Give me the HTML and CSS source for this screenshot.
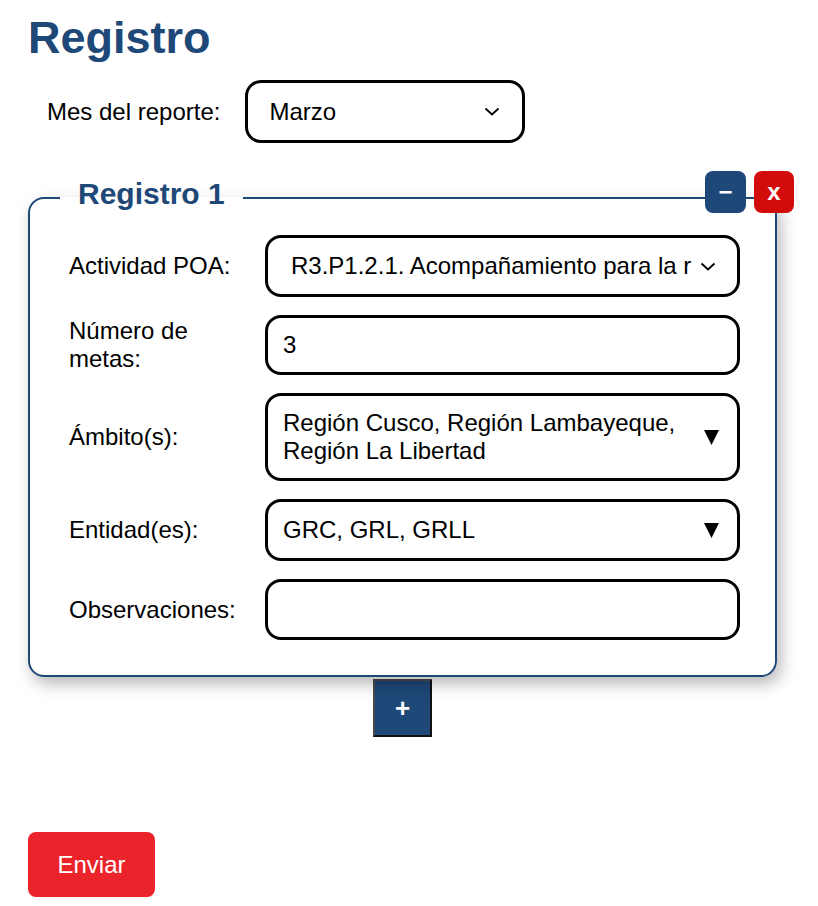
FILE: index.html
```html
<!DOCTYPE html>
<html lang="es">
<head>
<meta charset="utf-8">
<title>Registro</title>
<link rel="stylesheet" href="styles.css">
</head>
<body>
<main class="page">
  <h1 class="title">Registro</h1>

  <div class="month-row">
    <label class="month-label">Mes del reporte:</label>
    <div class="select month-select">
      <span class="select-text">Marzo</span>
      <svg class="chev" width="16" height="9" viewBox="0 0 16 9"><path d="M1.5 1.5 L8 7.5 L14.5 1.5" fill="none" stroke="#000" stroke-width="1.8"/></svg>
    </div>
  </div>

  <div class="record">
    <fieldset class="record-box">
      <legend class="record-legend">Registro 1</legend>
      <div class="grid">
        <label class="lbl">Actividad POA:</label>
        <div class="select act-select">
          <span class="select-text clip">R3.P1.2.1. Acompañamiento para la r</span>
          <svg class="chev" width="16" height="9" viewBox="0 0 16 9"><path d="M1.5 1.5 L8 7.5 L14.5 1.5" fill="none" stroke="#000" stroke-width="1.8"/></svg>
        </div>

        <label class="lbl">Número de metas:</label>
        <div class="field">3</div>

        <label class="lbl">Ámbito(s):</label>
        <div class="field multi tall">
          <span class="multi-text">Región Cusco, Región Lambayeque, Región La Libertad</span>
          <svg class="tri" width="15" height="15" viewBox="0 0 15 15"><polygon points="0,0 15,0 7.5,15" fill="#000"/></svg>
        </div>

        <label class="lbl">Entidad(es):</label>
        <div class="field multi ent">
          <span class="multi-text">GRC, GRL, GRLL</span>
          <svg class="tri" width="15" height="15" viewBox="0 0 15 15"><polygon points="0,0 15,0 7.5,15" fill="#000"/></svg>
        </div>

        <label class="lbl">Observaciones:</label>
        <div class="field obs"></div>
      </div>
    </fieldset>
    <div class="record-actions">
      <button class="icon-btn minus" type="button">&minus;</button>
      <button class="icon-btn close" type="button">x</button>
    </div>
  </div>

  <div class="add-row">
    <button class="add-btn" type="button">+</button>
  </div>

  <button class="send-btn" type="button">Enviar</button>
</main>
</body>
</html>
```

FILE: styles.css
```css
* { box-sizing: border-box; }

html, body {
  margin: 0;
  padding: 0;
  background: #fff;
}

body {
  font-family: "Liberation Sans", Arial, sans-serif;
  color: #000;
}

.page {
  width: 749px;
  margin-left: 28px;
  padding-top: 13px;
  padding-bottom: 9px;
}

.title {
  margin: 0;
  font-size: 45px;
  font-weight: bold;
  color: #1e4878;
  line-height: 49px;
}

.month-row {
  display: flex;
  align-items: center;
  gap: 25px;
  margin-top: 18px;
  padding-left: 19px;
}

.month-label {
  font-size: 24px;
}

.select {
  display: flex;
  align-items: center;
  border: 3px solid #000;
  border-radius: 16px;
  background: #fff;
  font-size: 24px;
  min-width: 0;
}

.month-select {
  width: 280px;
  height: 63px;
  padding: 0 22px 0 21px;
}

.select-text {
  flex: 1;
  min-width: 0;
}

.clip {
  white-space: nowrap;
  overflow: hidden;
}

.chev {
  flex: none;
  margin-left: 3px;
}

.record {
  position: relative;
  margin-top: 34px;
}

.record-box {
  margin: 0;
  min-width: 0;
  border: 2px solid #1e4878;
  border-radius: 16px;
  padding: 16px 35px 35px 39px;
  box-shadow: 4px 7px 16px rgba(0, 0, 0, 0.28);
  background: #fff;
}

.record-legend {
  margin-left: -9px;
  padding: 0 18px 8px;
  font-size: 30px;
  font-weight: bold;
  color: #1e4878;
}

.record-actions {
  position: absolute;
  top: -6px;
  right: -17px;
  display: flex;
  gap: 8px;
}

.icon-btn {
  height: 42px;
  border: none;
  border-radius: 8px;
  color: #fff;
  font-family: "Liberation Sans", Arial, sans-serif;
  font-weight: bold;
  font-size: 24px;
  padding: 0;
  line-height: 1;
}

.minus {
  width: 41px;
  background: #1e4878;
}

.close {
  width: 40px;
  background: #d20b0b;
}

.grid {
  display: grid;
  grid-template-columns: 177px minmax(0, 1fr);
  column-gap: 19px;
  row-gap: 18px;
  align-items: center;
}

.lbl {
  font-size: 24px;
  line-height: 28px;
}

.act-select {
  height: 62px;
  padding: 0 21px 0 23px;
}

.field {
  min-width: 0;
  border: 3px solid #000;
  border-radius: 16px;
  font-size: 24px;
  line-height: 28px;
  padding: 13px 15px;
  min-height: 60px;
}

.multi {
  display: flex;
  align-items: center;
  padding-right: 18px;
}

.multi-text {
  flex: 1;
  min-width: 0;
}

.tall {
  min-height: 88px;
}

.ent {
  min-height: 62px;
}

.obs {
  min-height: 61px;
}

.tri {
  flex: none;
  margin-left: 8px;
}

.add-row {
  display: flex;
  justify-content: center;
  padding-top: 2px;
}

.add-btn {
  width: 59px;
  height: 58px;
  background: #1e4878;
  color: #fff;
  border: 2px solid;
  border-color: #4a4a4a #111 #111 #4a4a4a;
  font-family: "Liberation Sans", Arial, sans-serif;
  font-weight: bold;
  font-size: 26px;
  padding: 0;
}

.send-btn {
  display: block;
  margin-top: 95px;
  width: 127px;
  height: 65px;
  background: #eb232b;
  color: #fff;
  border: none;
  border-radius: 8px;
  font-family: "Liberation Sans", Arial, sans-serif;
  font-size: 24px;
  padding: 0;
}
```
